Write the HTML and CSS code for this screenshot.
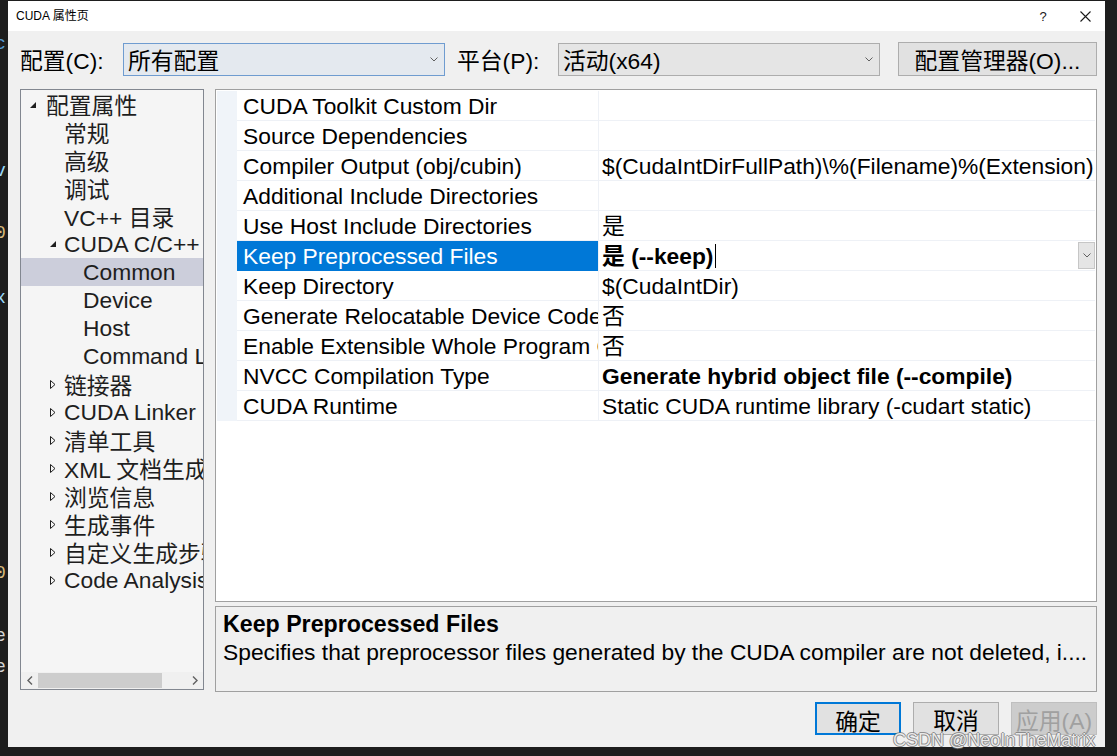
FILE: index.html
```html
<!DOCTYPE html>
<html lang="zh-CN">
<head>
<meta charset="utf-8">
<title>CUDA 属性页</title>
<link rel="stylesheet" href="styles.css">
</head>
<body>
<div class="desktop">
  <div class="editor-bits">
    <span class="bit bit-c">c</span>
    <span class="bit bit-v">v</span>
    <span class="bit bit-0a">0</span>
    <span class="bit bit-x">x</span>
    <span class="bit bit-0b">0</span>
    <span class="bit bit-e1">e</span>
    <span class="bit bit-e2">e</span>
  </div>

  <div class="dialog">
    <div class="titlebar">
      <span class="title">CUDA 属性页</span>
      <div class="title-btns">
        <span class="tbtn help">?</span>
        <span class="tbtn close">
          <svg width="11" height="11" viewBox="0 0 11 11"><path d="M0.5 0.5 L10.5 10.5 M10.5 0.5 L0.5 10.5" stroke="#1a1a1a" stroke-width="1.1" fill="none"/></svg>
        </span>
      </div>
    </div>

    <div class="body">
      <div class="toolbar">
        <span class="tb-label lbl-config">配置(C):</span>
        <div class="combo combo-focus">
          <span class="combo-text">所有配置</span>
          <svg class="chev" width="8" height="5" viewBox="0 0 8 5"><path d="M0.5 0.5 L4 4 L7.5 0.5" stroke="#606060" fill="none"/></svg>
        </div>
        <span class="tb-label lbl-platform">平台(P):</span>
        <div class="combo">
          <span class="combo-text">活动(x64)</span>
          <svg class="chev" width="8" height="5" viewBox="0 0 8 5"><path d="M0.5 0.5 L4 4 L7.5 0.5" stroke="#606060" fill="none"/></svg>
        </div>
        <button class="btn btn-manager">配置管理器(O)...</button>
      </div>

      <div class="main">
        <div class="tree">
          <ul class="tree-list">
            <li class="node l0"><span class="arrow"><svg width="6" height="6" viewBox="0 0 6 6"><path d="M6 0 L6 6 L0 6 Z" fill="#1e1e1e"/></svg></span>配置属性</li>
            <li class="node l1 noarrow">常规</li>
            <li class="node l1 noarrow">高级</li>
            <li class="node l1 noarrow">调试</li>
            <li class="node l1 noarrow">VC++ 目录</li>
            <li class="node l1"><span class="arrow"><svg width="6" height="6" viewBox="0 0 6 6"><path d="M6 0 L6 6 L0 6 Z" fill="#1e1e1e"/></svg></span>CUDA C/C++</li>
            <li class="node l2 selected">Common</li>
            <li class="node l2">Device</li>
            <li class="node l2">Host</li>
            <li class="node l2">Command Line</li>
            <li class="node l1"><span class="arrow"><svg width="6" height="9" viewBox="0 0 6 9"><path d="M0.5 0.5 L5 4.5 L0.5 8.5 Z" fill="none" stroke="#1e1e1e"/></svg></span>链接器</li>
            <li class="node l1"><span class="arrow"><svg width="6" height="9" viewBox="0 0 6 9"><path d="M0.5 0.5 L5 4.5 L0.5 8.5 Z" fill="none" stroke="#1e1e1e"/></svg></span>CUDA Linker</li>
            <li class="node l1"><span class="arrow"><svg width="6" height="9" viewBox="0 0 6 9"><path d="M0.5 0.5 L5 4.5 L0.5 8.5 Z" fill="none" stroke="#1e1e1e"/></svg></span>清单工具</li>
            <li class="node l1"><span class="arrow"><svg width="6" height="9" viewBox="0 0 6 9"><path d="M0.5 0.5 L5 4.5 L0.5 8.5 Z" fill="none" stroke="#1e1e1e"/></svg></span>XML 文档生成器</li>
            <li class="node l1"><span class="arrow"><svg width="6" height="9" viewBox="0 0 6 9"><path d="M0.5 0.5 L5 4.5 L0.5 8.5 Z" fill="none" stroke="#1e1e1e"/></svg></span>浏览信息</li>
            <li class="node l1"><span class="arrow"><svg width="6" height="9" viewBox="0 0 6 9"><path d="M0.5 0.5 L5 4.5 L0.5 8.5 Z" fill="none" stroke="#1e1e1e"/></svg></span>生成事件</li>
            <li class="node l1"><span class="arrow"><svg width="6" height="9" viewBox="0 0 6 9"><path d="M0.5 0.5 L5 4.5 L0.5 8.5 Z" fill="none" stroke="#1e1e1e"/></svg></span>自定义生成步骤</li>
            <li class="node l1"><span class="arrow"><svg width="6" height="9" viewBox="0 0 6 9"><path d="M0.5 0.5 L5 4.5 L0.5 8.5 Z" fill="none" stroke="#1e1e1e"/></svg></span>Code Analysis</li>
          </ul>
          <div class="hscroll">
            <span class="sb-btn"><svg width="6" height="9" viewBox="0 0 6 9"><path d="M5 0.5 L1 4.5 L5 8.5" stroke="#606060" stroke-width="1.4" fill="none"/></svg></span>
            <div class="sb-track"><div class="sb-thumb"></div></div>
            <span class="sb-btn"><svg width="6" height="9" viewBox="0 0 6 9"><path d="M1 0.5 L5 4.5 L1 8.5" stroke="#606060" stroke-width="1.4" fill="none"/></svg></span>
          </div>
        </div>

        <div class="right">
          <div class="grid">
            <div class="row"><div class="gut"></div><div class="name">CUDA Toolkit Custom Dir</div><div class="val"></div></div>
            <div class="row"><div class="gut"></div><div class="name">Source Dependencies</div><div class="val"></div></div>
            <div class="row"><div class="gut"></div><div class="name">Compiler Output (obj/cubin)</div><div class="val">$(CudaIntDirFullPath)\%(Filename)%(Extension).obj</div></div>
            <div class="row"><div class="gut"></div><div class="name">Additional Include Directories</div><div class="val"></div></div>
            <div class="row"><div class="gut"></div><div class="name">Use Host Include Directories</div><div class="val">是</div></div>
            <div class="row"><div class="gut"></div><div class="name sel">Keep Preprocessed Files</div><div class="val edit"><span class="bold">是 (--keep)</span><span class="caret"></span><span class="dd-btn"><svg width="8" height="5" viewBox="0 0 8 5"><path d="M0.5 0.5 L4 4 L7.5 0.5" stroke="#606060" fill="none"/></svg></span></div></div>
            <div class="row"><div class="gut"></div><div class="name">Keep Directory</div><div class="val">$(CudaIntDir)</div></div>
            <div class="row"><div class="gut"></div><div class="name">Generate Relocatable Device Code</div><div class="val">否</div></div>
            <div class="row"><div class="gut"></div><div class="name">Enable Extensible Whole Program Compilation</div><div class="val">否</div></div>
            <div class="row"><div class="gut"></div><div class="name">NVCC Compilation Type</div><div class="val"><span class="bold">Generate hybrid object file (--compile)</span></div></div>
            <div class="row"><div class="gut"></div><div class="name">CUDA Runtime</div><div class="val">Static CUDA runtime library (-cudart static)</div></div>
          </div>
          <div class="desc">
            <div class="desc-title">Keep Preprocessed Files</div>
            <div class="desc-text">Specifies that preprocessor files generated by the CUDA compiler are not deleted, i....</div>
          </div>
        </div>
      </div>

      <div class="actions">
        <button class="btn act primary">确定</button>
        <button class="btn act">取消</button>
        <button class="btn act disabled">应用(A)</button>
      </div>
    </div>
  </div>

  <div class="watermark">CSDN @NeoInTheMatrix</div>
</div>
</body>
</html>
```

FILE: styles.css
```css
* {
  box-sizing: border-box;
}

html,
body {
  margin: 0;
  padding: 0;
}

body {
  background: #1e1e1e;
  width: 1117px;
  height: 756px;
  overflow: hidden;
  font-family: "Liberation Sans", Arial, "Noto Sans CJK SC", sans-serif;
  color: #000;
}

.desktop {
  position: relative;
  width: 1117px;
  height: 756px;
}

/* fragments of the code editor behind the dialog */
.editor-bits .bit {
  position: absolute;
  left: -5px;
  font-family: "Liberation Mono", monospace;
  font-size: 18px;
  line-height: 20px;
}
.bit-c { top: 33px; color: #569cd6; }
.bit-v { top: 160px; color: #9cdcfe; }
.bit-0a { top: 222px; color: #d7ba7d; }
.bit-x { top: 287px; color: #9cdcfe; }
.bit-0b { top: 562px; color: #d7ba7d; }
.bit-e1 { top: 625px; color: #d4d4d4; }
.bit-e2 { top: 656px; color: #d4d4d4; }

.dialog {
  margin: 1px 0 0 8px;
  width: 1097px;
  height: 746px;
  background: #f0f0f0;
  display: flex;
  flex-direction: column;
  position: relative;
}

.titlebar {
  height: 30px;
  flex: none;
  background: #ffffff;
  display: flex;
  align-items: center;
  justify-content: space-between;
  padding-left: 8px;
}

.title {
  font-size: 12px;
  line-height: 14px;
  color: #000;
}

.title-btns {
  display: flex;
  height: 30px;
}

.tbtn {
  height: 30px;
  display: flex;
  align-items: center;
  justify-content: center;
}

.help {
  width: 44px;
  font-size: 13px;
  color: #1a1a1a;
}

.close {
  width: 40px;
}

.body {
  flex: 1;
  display: flex;
  flex-direction: column;
  padding: 11px 8px 0 12px;
}

.toolbar {
  display: flex;
  align-items: center;
  height: 34px;
}

.tb-label {
  font-size: 22.8px;
  white-space: nowrap;
}

.lbl-config {
  width: 103px;
}

.lbl-platform {
  width: 101px;
  margin-left: 12px;
}

.combo {
  width: 322px;
  height: 33px;
  border: 1px solid #adadad;
  background: #e5e5e5;
  display: flex;
  align-items: center;
  justify-content: space-between;
  padding: 0 6px 0 4px;
  font-size: 22.8px;
}

.combo-focus {
  border-color: #6f9cd0;
  background: #e4e9ef;
}

.chev {
  flex: none;
}

.btn {
  font-family: "Liberation Sans", Arial, "Noto Sans CJK SC", sans-serif;
  font-size: 22.8px;
  color: #000;
  background: #e1e1e1;
  border: 1px solid #adadad;
  padding: 0;
  margin: 0;
}

.btn-manager {
  margin-left: auto;
  width: 199px;
  height: 34px;
}

.main {
  display: flex;
  gap: 11px;
  margin-top: 13px;
  height: 603px;
}

/* tree */
.tree {
  width: 184px;
  height: 601px;
  border: 1px solid #828790;
  background: #f5f5f5;
  display: flex;
  flex-direction: column;
}

.tree-list {
  flex: 1;
  list-style: none;
  margin: 0;
  padding: 0;
  overflow: hidden;
}

.node {
  height: 28px;
  display: flex;
  align-items: center;
  white-space: nowrap;
  overflow: hidden;
  font-size: 22.8px;
  color: #1e1e1e;
}

.node .arrow {
  flex: none;
  width: 16px;
  display: flex;
  align-items: center;
  padding-top: 2px;
}

.l0 { padding-left: 9px; }
.l1 { padding-left: 28px; }
.l1 .arrow { width: 15px; padding-left: 1px; padding-top: 0; }
.l1.noarrow { padding-left: 43px; }
.l2 { padding-left: 62px; }

.node.selected {
  background: #cccedb;
}

.hscroll {
  height: 17px;
  flex: none;
  display: flex;
  align-items: center;
  background: #f0f0f0;
}

.sb-btn {
  width: 17px;
  height: 17px;
  display: flex;
  align-items: center;
  justify-content: center;
  flex: none;
}

.sb-track {
  flex: 1;
  height: 15px;
}

.sb-thumb {
  width: 124px;
  height: 15px;
  background: #cdcdcd;
}

/* right side */
.right {
  width: 882px;
  display: flex;
  flex-direction: column;
}

.grid {
  height: 513px;
  border: 1px solid #a0a0a0;
  background: #ffffff;
  padding: 1px;
}

.row {
  display: flex;
  height: 30px;
  font-size: 22.8px;
}

.gut {
  width: 20px;
  flex: none;
  background: #f0f4f9;
}

.name {
  width: 361px;
  flex: none;
  padding-left: 6px;
  padding-top: 1px;
  line-height: 28px;
  white-space: nowrap;
  overflow: hidden;
  border-bottom: 1px solid #eef1f6;
}

.name.sel {
  background: #0078d7;
  color: #ffffff;
  border-bottom-color: #0078d7;
}

.val {
  flex: 1;
  min-width: 0;
  padding-left: 3px;
  padding-top: 1px;
  line-height: 28px;
  white-space: nowrap;
  overflow: hidden;
  border-left: 1px solid #eef1f6;
  border-bottom: 1px solid #eef1f6;
  display: flex;
  align-items: center;
}

.val.edit {
  padding-top: 0;
}

.bold {
  font-weight: bold;
}

.caret {
  width: 1px;
  height: 24px;
  background: #000;
  margin-left: 2px;
}

.dd-btn {
  margin-left: auto;
  width: 17px;
  height: 27px;
  background: #e5e5e5;
  border: 1px solid #c6c6c6;
  display: flex;
  align-items: center;
  justify-content: center;
}

.desc {
  margin-top: 4px;
  height: 86px;
  border: 1px solid #a0a0a0;
  background: #f0f0f0;
  padding: 3px 7px 2px;
  font-size: 22.8px;
  line-height: 28px;
}

.desc-title {
  font-weight: bold;
  font-size: 23.2px;
}

.actions {
  display: flex;
  justify-content: flex-end;
  gap: 12px;
  margin-top: 10px;
}

.act {
  width: 86px;
  height: 33px;
}

.act.primary {
  border: 2px solid #0078d7;
}

.act.disabled {
  background: #cccccc;
  border-color: #bfbfbf;
  color: #a0a0a0;
}

.watermark {
  position: absolute;
  left: 893px;
  top: 729px;
  font-size: 18px;
  line-height: 20px;
  color: rgba(255, 255, 255, 0.85);
  text-shadow: 1px 0 0 rgba(110, 110, 110, 0.7), -1px 0 0 rgba(110, 110, 110, 0.7), 0 1px 0 rgba(110, 110, 110, 0.7), 0 -1px 0 rgba(110, 110, 110, 0.7);
  white-space: nowrap;
}
```
